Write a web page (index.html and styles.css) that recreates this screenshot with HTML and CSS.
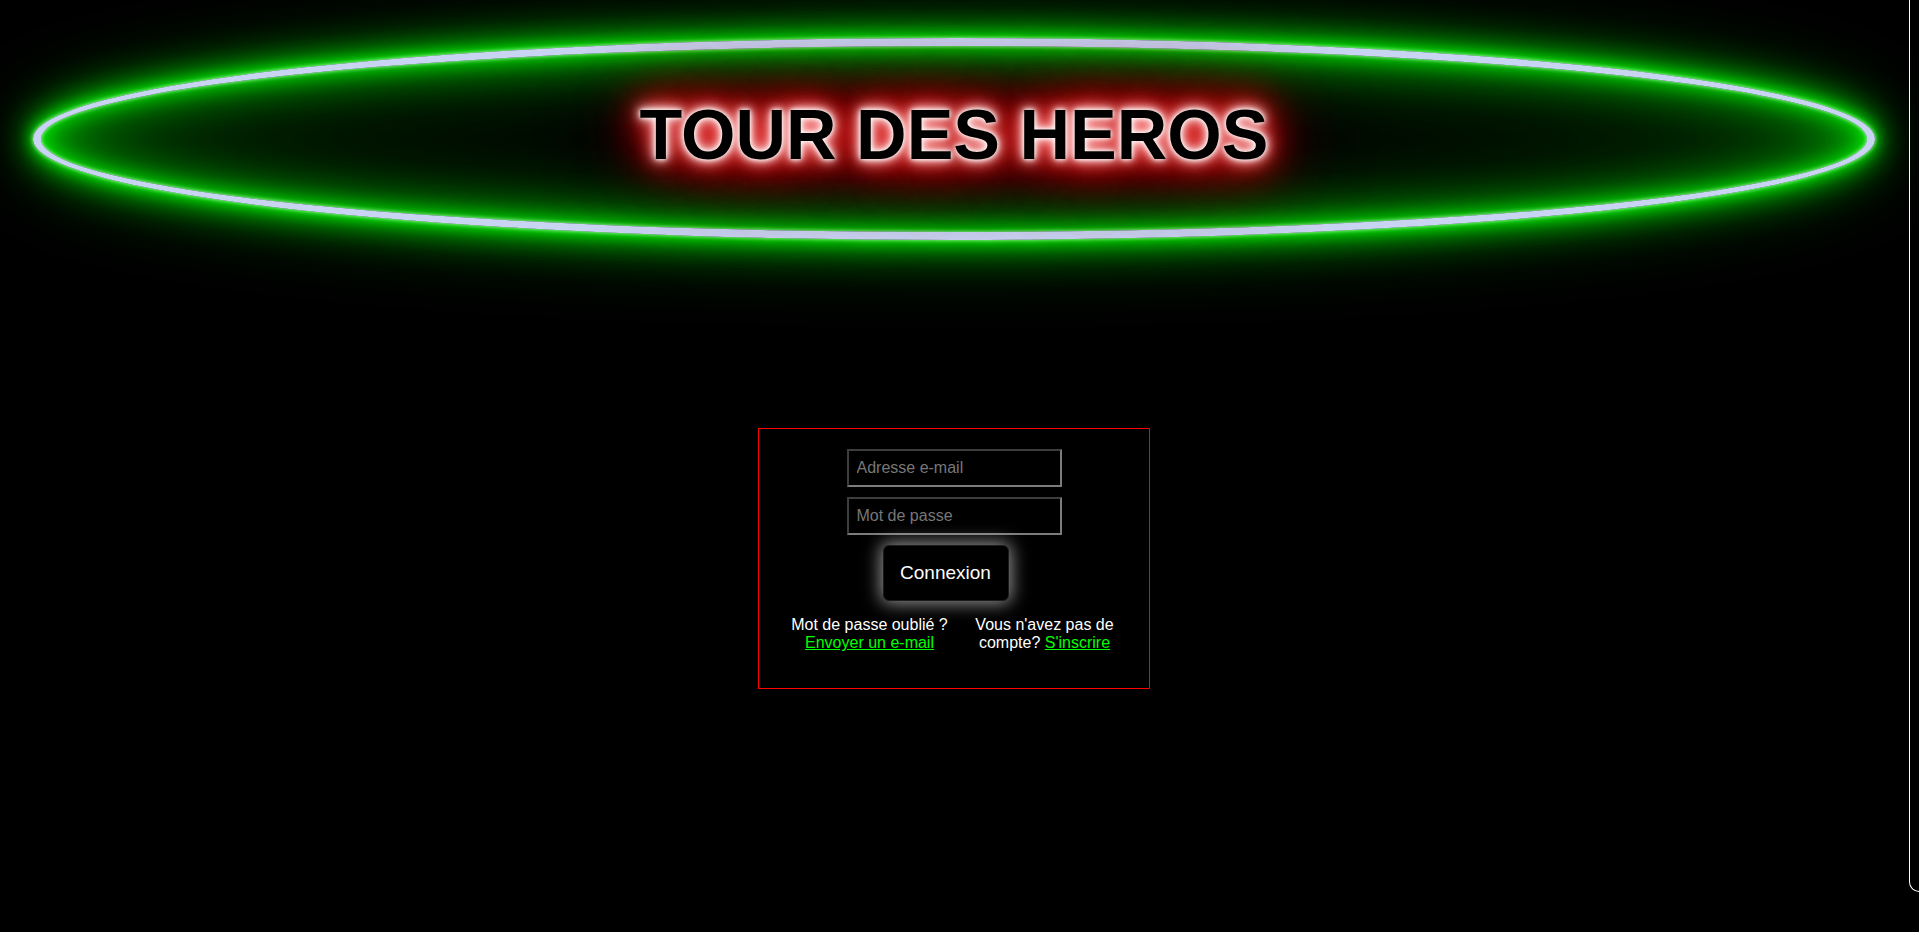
FILE: index.html
```html
<!DOCTYPE html>
<html lang="fr">
<head>
<meta charset="utf-8">
<title>Tour des Heros</title>
<link rel="stylesheet" href="styles.css">
</head>
<body>
<div class="page">
  <header class="banner">
    <h1 class="title">TOUR DES HEROS</h1>
  </header>
  <main class="login">
    <form class="card">
      <input class="field" type="email" placeholder="Adresse e-mail">
      <input class="field" type="password" placeholder="Mot de passe">
      <button class="btn" type="button">Connexion</button>
      <div class="links">
        <p>Mot de passe oublié ? <a href="#">Envoyer un e-mail</a></p>
        <p>Vous n'avez pas de compte? <a href="#">S'inscrire</a></p>
      </div>
    </form>
  </main>
</div>
<div class="scroll-thumb" aria-hidden="true"></div>
</body>
</html>
```
FILE: styles.css
```css
html {
  background: #000;
}

body {
  margin: 0;
  background: #000;
  color: #fff;
  font-family: "Liberation Sans", Arial, sans-serif;
  overflow: hidden;
}

.page {
  margin-right: 11px;
  min-height: 932px;
  box-sizing: border-box;
  padding-top: 38px;
}

.scroll-thumb {
  position: fixed;
  top: 0;
  right: -10px;
  width: 20px;
  height: 892px;
  box-sizing: border-box;
  border-left: 1px solid #fff;
  border-bottom: 1px solid #fff;
  border-bottom-left-radius: 10px;
}

.banner {
  height: 202px;
  box-sizing: border-box;
  margin: 0 33px;
  padding-top: 53px;
  border: 8px solid #c9d3f2;
  border-radius: 50%;
  display: flex;
  justify-content: center;
  align-items: flex-start;
  box-shadow:
    0 0 4px #c0ffc0,
    0 0 14px #00f000,
    0 0 28px #00e000,
    0 0 48px #00b000,
    0 0 80px #006000,
    inset 0 0 4px #c0ffc0,
    inset 0 0 20px #00f000,
    inset 0 0 45px #00c000,
    inset 0 0 85px #007000,
    inset 0 0 130px #003000;
}

.title {
  margin: 0;
  font-size: 70px;
  line-height: 72px;
  font-weight: bold;
  color: #000;
  white-space: nowrap;
  text-shadow:
    0 0 4px #fff,
    0 0 8px #fff,
    0 0 14px #fcc,
    0 0 20px #f88,
    0 0 28px #f22,
    0 0 38px #f00,
    0 0 50px #e00,
    0 0 65px #c00,
    0 0 85px #a00,
    0 0 110px #700;
}

.login {
  display: flex;
  justify-content: center;
  margin-top: 188px;
}

.card {
  width: 392px;
  box-sizing: border-box;
  border: 1px solid #f00;
  padding: 20px 0 35px;
  display: flex;
  flex-direction: column;
  align-items: center;
}

.field {
  width: 215px;
  height: 38px;
  box-sizing: border-box;
  margin: 0 0 10px;
  padding: 8px;
  border: 2px solid;
  border-color: #3d3d3d #7c7c7c #7c7c7c #3d3d3d;
  background: #000;
  color: #fff;
  font: 16px "Liberation Sans", Arial, sans-serif;
  outline: none;
}

.field::placeholder {
  color: #777;
}

.btn {
  width: 126px;
  height: 56px;
  margin-right: 17px;
  padding: 0;
  background: #000;
  color: #fff;
  font: 19px "Liberation Sans", Arial, sans-serif;
  border: 1px solid #1c1c1c;
  border-radius: 6px;
  box-shadow: 0 0 18px 2px rgba(255, 255, 255, 0.6);
  cursor: pointer;
}

.links {
  display: grid;
  grid-template-columns: 165px 165px;
  column-gap: 10px;
  padding-left: 6px;
  margin-top: 15px;
  text-align: center;
  font-size: 16px;
  line-height: 18.4px;
}

.links p {
  margin: 0;
}

.links a {
  color: #0f0;
  text-decoration: underline;
}
```
